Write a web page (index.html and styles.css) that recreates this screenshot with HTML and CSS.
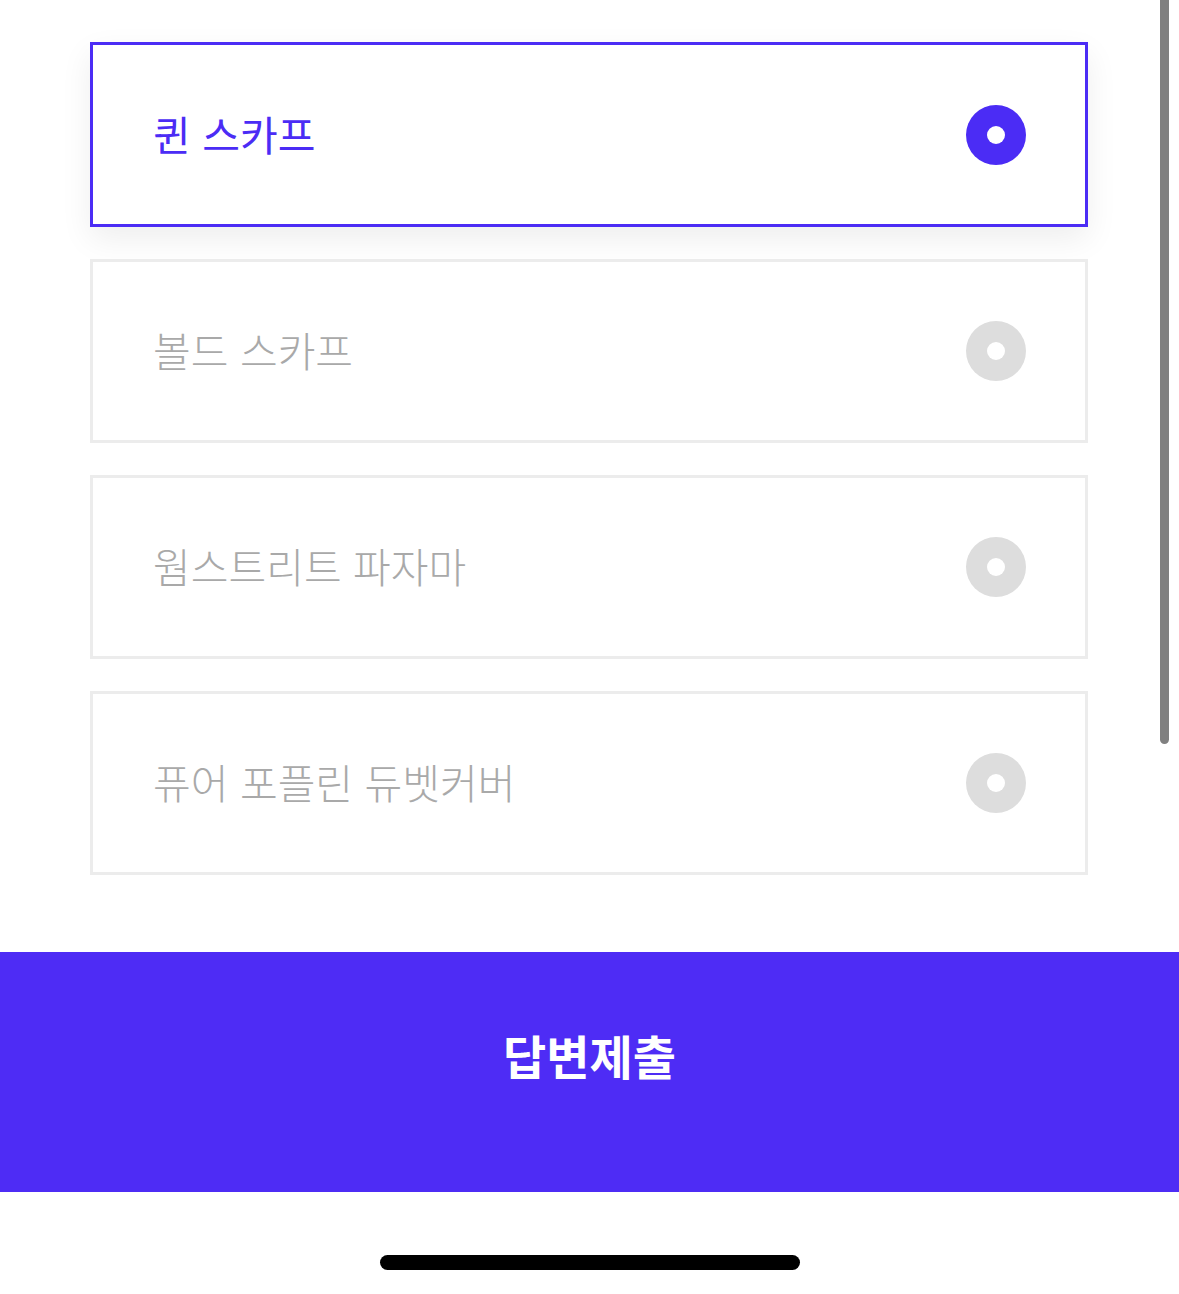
FILE: index.html
```html
<!DOCTYPE html>
<html lang="ko">
<head>
<meta charset="utf-8">
<link rel="stylesheet" href="styles.css">
</head>
<body>
<div class="screen">
  <ul class="options">
    <li class="option selected">
      <span class="label">퀸 스카프</span>
      <span class="radio"></span>
    </li>
    <li class="option">
      <span class="label">볼드 스카프</span>
      <span class="radio"></span>
    </li>
    <li class="option">
      <span class="label">웜스트리트 파자마</span>
      <span class="radio"></span>
    </li>
    <li class="option">
      <span class="label">퓨어 포플린 듀벳커버</span>
      <span class="radio"></span>
    </li>
  </ul>
  <button class="submit">답변제출</button>
  <div class="home-area"><div class="home-indicator"></div></div>
  <div class="scrollbar"></div>
</div>
</body>
</html>
```
FILE: styles.css
```css
* { box-sizing: border-box; }
html, body { margin: 0; padding: 0; background: #fff; }
body {
  font-family: "Noto Sans CJK KR", "Noto Sans", sans-serif;
  width: 1179px;
  height: 1294px;
  overflow: hidden;
}
.screen {
  position: relative;
  width: 1179px;
  height: 1294px;
  display: flex;
  flex-direction: column;
}
.options {
  list-style: none;
  margin: 0;
  padding: 42px 91px 0 90px;
  display: flex;
  flex-direction: column;
  gap: 32px;
}
.option {
  height: 185px;
  border: 3px solid #ececec;
  background: #fff;
  display: flex;
  align-items: center;
  justify-content: space-between;
  padding: 0 59px 4px 60px;
}
.option + .option { height: 184px; }
.option.selected {
  border-color: #4b2cf5;
  box-shadow: 0 12px 30px rgba(0, 0, 0, 0.07);
}
.label {
  font-size: 41px;
  font-weight: 300;
  color: #a9a9a9;
}
.selected .label {
  color: #4b2cf5;
  font-weight: 400;
}
.radio {
  margin-top: 4px;
  width: 60px;
  height: 60px;
  border-radius: 50%;
  background: #dddddd;
  display: flex;
  align-items: center;
  justify-content: center;
}
.radio::after {
  content: "";
  width: 18px;
  height: 18px;
  border-radius: 50%;
  background: #fff;
}
.selected .radio { background: #4b2cf5; }
.submit {
  margin-top: 77px;
  height: 240px;
  width: 100%;
  border: 0;
  background: #4e2cf5;
  color: #fff;
  font-family: "Noto Sans CJK KR", sans-serif;
  font-size: 47px;
  font-weight: 700;
  padding: 0 0 36px 0;
}
.home-area {
  flex: 1;
  display: flex;
  justify-content: center;
  padding-top: 63px;
}
.home-indicator {
  width: 420px;
  height: 15px;
  border-radius: 8px;
  background: #000;
}
.scrollbar {
  position: absolute;
  top: 0;
  right: 10px;
  width: 9px;
  height: 744px;
  background: #808080;
  border-radius: 0 0 5px 5px;
}
```
